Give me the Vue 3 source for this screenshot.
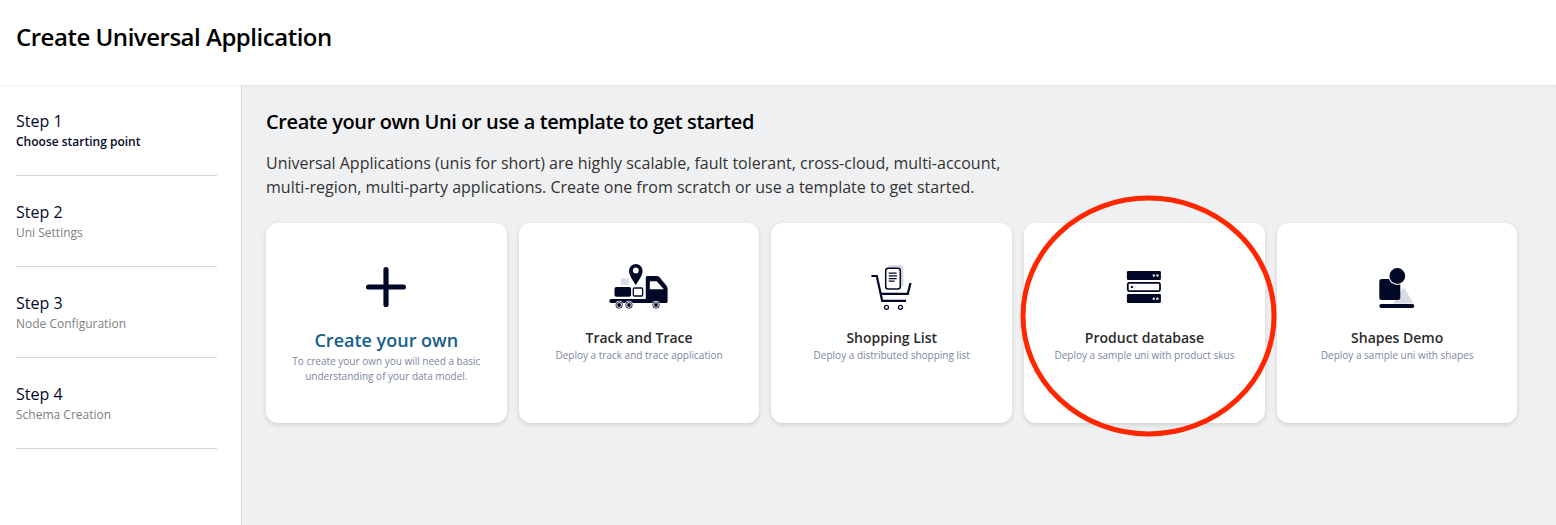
<script setup>
const steps = [
  { title: 'Step 1', label: 'Choose starting point', active: true },
  { title: 'Step 2', label: 'Uni Settings' },
  { title: 'Step 3', label: 'Node Configuration' },
  { title: 'Step 4', label: 'Schema Creation' },
]
const cards = [
  { icon: 'truck', title: 'Track and Trace', text: 'Deploy a track and trace application' },
  { icon: 'cart', title: 'Shopping List', text: 'Deploy a distributed shopping list' },
  { icon: 'database', title: 'Product database', text: 'Deploy a sample uni with product skus', circled: true },
  { icon: 'shapes', title: 'Shapes Demo', text: 'Deploy a sample uni with shapes' },
]
</script>

<template>
  <div class="page">
    <header class="header"><h1>Create Universal Application</h1></header>
    <div class="body">
      <nav class="sidebar">
        <div v-for="s in steps" :key="s.title" class="step" :class="{ active: s.active }">
          <div class="step-title">{{ s.title }}</div>
          <div class="step-label">{{ s.label }}</div>
        </div>
      </nav>
      <main class="content">
        <h2>Create your own Uni or use a template to get started</h2>
        <p class="intro">Universal Applications (unis for short) are highly scalable, fault tolerant, cross-cloud, multi-account,<br>multi-region, multi-party applications. Create one from scratch or use a template to get started.</p>
        <div class="cards">
          <section class="card own">
            <svg class="icon" viewBox="-0.3 0 80 60">
              <path d="M39.7 14.6V49.4M22.3 32H57.1" stroke="#020928" stroke-width="5.2" stroke-linecap="round" />
            </svg>
            <h3>Create your own</h3>
            <p>To create your own you will need a basic<br>understanding of your data model.</p>
          </section>
          <section v-for="c in cards" :key="c.icon" class="card">
            <svg v-if="c.icon === 'truck'" class="icon" viewBox="-0.8 0 80 60">
              <rect x="21" y="23.5" width="8" height="6.5" fill="#d8dae4" />
              <path d="M36 9a6.8 6.8 0 0 0-6.8 6.8C29.200 21 33.500 25.500 36 30.200C38.500 25.500 42.800 21 42.800 15.800A6.800 6.800 0 0 0 36 9Z" fill="#020928" />
              <circle cx="36" cy="15.500" r="2.900" fill="#fff" />
              <rect x="14.700" y="32" width="16.600" height="9.700" rx="1.800" fill="#020928" />
              <rect x="33.500" y="33" width="9.300" height="8" rx="1" fill="#fff" stroke="#020928" stroke-width="1.300" />
              <path d="M11.500 44H46V22.500Q46 21 47.500 21H57Q58.700 21 59.800 22.300L66.500 30.500Q67.800 32 67.800 34V46.500Q67.800 48 66.300 48H11.500A2 2 0 0 1 11.500 44Z" fill="#020928" />
              <path d="M51 26.300H57L64 34.200H50V27.300Q50 26.300 51 26.300Z" fill="#fff" />
              <g v-for="x in [19.300, 29.200, 56.200]" :key="x">
                <circle :cx="x" cy="50" r="4.300" fill="#fff" />
                <circle :cx="x" cy="50" r="3.500" fill="#020928" />
                <circle :cx="x" cy="50" r="2.700" fill="#fff" />
                <circle :cx="x" cy="50" r="1.900" fill="#020928" />
              </g>
            </svg>
            <svg v-else-if="c.icon === 'cart'" class="icon" viewBox="-8 0 80 60" fill="none" stroke="#020928">
              <rect x="28" y="10" width="15.500" height="22" rx="2.500" fill="#d8dae4" stroke="none" />
              <rect x="25.700" y="13.300" width="14.600" height="20.800" rx="2.500" fill="#fff" stroke-width="1.500" />
              <path d="M28.700 18.200H36.600M28.700 20.900H37M28.700 23.500H36.600M28.700 26H34.600" stroke-width="1.250" />
              <path d="M11.400 21H16.800L22.200 45.800H46" stroke-width="2.200" />
              <path d="M20 38.800H47.800L50.500 28" stroke-width="2.200" />
              <circle cx="26.500" cy="52.300" r="2" stroke-width="1.300" />
              <circle cx="40.500" cy="52.300" r="2" stroke-width="1.300" />
            </svg>
            <svg v-else-if="c.icon === 'database'" class="icon" viewBox="-10.9 -5 80 60">
              <rect x="12" y="11" width="34" height="9" rx="1.300" fill="#020928" />
              <rect x="12.900" y="22.900" width="32.200" height="8.200" rx="1.500" fill="#fff" stroke="#020928" stroke-width="1.800" />
              <rect x="12" y="34" width="34" height="9" rx="1.300" fill="#020928" />
              <path d="M37.700 14.500h2.400v1.500l-1.200 1-1.200-1zM41.300 14.500h2.400v1.500l-1.200 1-1.200-1zM37.700 39.700h2.400v-1.500l-1.200-1-1.200 1zM41.300 39.700h2.400v-1.500l-1.200-1-1.200 1z" fill="#e5e7ee" />
              <path d="M16 26h1.600l1 1-1 1H16z" fill="#020928" />
              <rect x="20" y="26" width="1.500" height="2" fill="#d8dae4" />
            </svg>
            <svg v-else class="icon" viewBox="-13.3 -5 80 60">
              <path d="M23 43.500L32.300 28.600Q33.300 27.300 34.300 28.600L43.300 43.500Z" fill="#d8dae4" />
              <rect x="9" y="19" width="21" height="21" rx="2.500" fill="#020928" />
              <circle cx="27" cy="16" r="9" fill="#fff" />
              <circle cx="27" cy="16" r="7.900" fill="#020928" />
              <path d="M11 46H42" stroke="#020928" stroke-width="4" stroke-linecap="round" />
            </svg>
            <h3>{{ c.title }}</h3>
            <p>{{ c.text }}</p>
            <svg v-if="c.circled" class="ring" viewBox="0 0 258 244">
              <ellipse cx="128.500" cy="122" rx="125.500" ry="118" fill="none" stroke="#ff2600" stroke-width="5" />
            </svg>
          </section>
        </div>
      </main>
    </div>
  </div>
</template>

<style>
body { margin: 0; overflow: hidden; }
</style>

<style scoped>
* { box-sizing: border-box; }
h1, h2, h3, p { margin: 0; }
.page { height: 525px; display: flex; flex-direction: column; background: #fff; font-family: "Open Sans", sans-serif; color: #000; }
.header { height: 85px; padding: 20px 16px 0; flex: none; }
h1 { font-size: 24px; line-height: 33px; font-weight: 600; letter-spacing: -0.48px; white-space: nowrap; }
.body { flex: 1; display: flex; box-shadow: inset 0 2px 2px -1px rgba(0, 0, 0, .07); }
.sidebar { width: 242px; padding: 0 24px 0 16px; border-right: 1px solid #d3d4da; }
.step { height: 91px; padding-top: 25px; border-bottom: 1px solid #d4d5e1; color: #020928; }
.step-title { font-size: 16px; line-height: 22px; }
.step-label { font-size: 12px; line-height: 18px; color: #808080; margin-top: 1px; }
.active .step-label { color: #020928; font-weight: 600; }
.content { flex: 1; padding: 24px 38.500px 0 24px; background: #eff0f2; box-shadow: inset 0 2px 2px -1px rgba(0, 0, 0, .06); }
h2 { font-size: 20px; line-height: 26px; font-weight: 600; letter-spacing: -0.4px; white-space: nowrap; }
.intro { font-size: 16px; line-height: 24px; color: #333; margin-top: 16px; white-space: nowrap; }
.cards { margin-top: 24px; display: grid; grid-template-columns: repeat(5, 1fr); gap: 12px; }
.card { position: relative; height: 200px; padding-top: 32px; background: #fff; border-radius: 12px; box-shadow: 0 2px 5px rgba(0, 0, 0, .13); text-align: center; white-space: nowrap; }
.icon { display: block; width: 80px; height: 60px; margin: 0 auto; }
h3 { font-size: 14px; line-height: 20px; font-weight: 600; color: #2b2b2b; margin-top: 13px; }
.card p { font-size: 10px; line-height: 15px; color: #7c86a2; }
.own h3 { font-size: 18px; line-height: 24px; color: #155f8c; margin-top: 13px; }
.own p { margin-top: 2px; }
.ring { position: absolute; left: -4px; top: -29px; width: 258px; height: 244px; z-index: 2; }
</style>
